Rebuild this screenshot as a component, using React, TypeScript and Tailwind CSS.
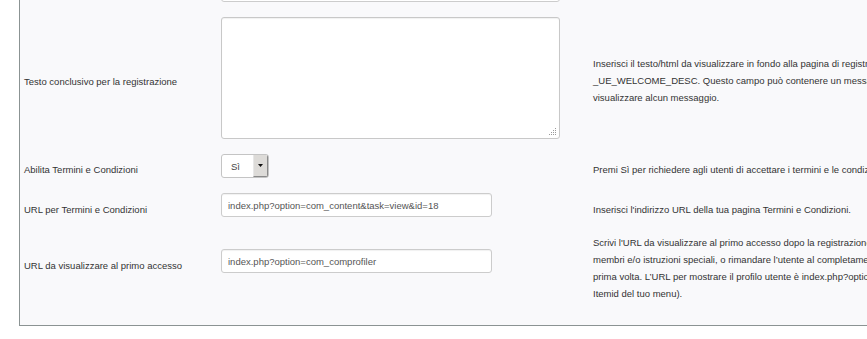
import React from 'react';

const font = { fontFamily: '"Liberation Sans", Arial, sans-serif' };

// Little dotted grip drawn in the textarea corner
const Grip = () => (
  <svg width="9" height="9" viewBox="0 0 9 9" className="absolute right-[2px] bottom-[2px]">
    {[
      [7, 1], [7, 3], [5, 3], [7, 5], [5, 5], [3, 5], [7, 7], [5, 7], [3, 7], [1, 7],
    ].map(([x, y], i) => (
      <rect key={i} x={x} y={y} width="1" height="1" fill="#9a9a9a" />
    ))}
  </svg>
);

const TextInput = ({ value, width }: { value: string; width: string }) => (
  <div
    className={`h-[24px] ${width} bg-white border border-[#cccccc] rounded-[3px] shadow-[inset_0_1px_1px_rgba(0,0,0,0.06)] flex items-center pl-[6px] text-[9.5px] text-[#555] whitespace-nowrap`}
  >
    {value}
  </div>
);

export default function App() {
  return (
    <div className="w-[867px] h-[339px] bg-white overflow-hidden pl-[19px] text-[#333] text-[9.5px] leading-[17px]" style={font}>
      <div className="w-[1000px] -mt-[28px] bg-[#f9f9fb] border-l border-b border-[#8b9393]">
        {/* row cut off at the top */}
        <div className="flex h-[30px] pt-[6px]">
          <div className="w-[201px] shrink-0" />
          <div className="w-[372px] shrink-0">
            <TextInput value="" width="w-[339px]" />
          </div>
        </div>

        {/* Testo conclusivo */}
        <div className="flex h-[137px]">
          <div className="w-[201px] shrink-0 pl-[4px] pt-[71px] whitespace-nowrap">Testo conclusivo per la registrazione</div>
          <div className="w-[372px] shrink-0 pt-[15px]">
            <div className="relative w-[339px] h-[122px] bg-white border border-[#c8c8c8] rounded-[3px] shadow-[inset_0_1px_1px_rgba(0,0,0,0.06)]">
              <Grip />
            </div>
          </div>
          <div className="flex-1 pt-[53px] whitespace-nowrap">
            Inserisci il testo/html da visualizzare in fondo alla pagina di registrazione. Puoi usare la stringa di lingua
            <br />
            _UE_WELCOME_DESC. Questo campo può contenere un messaggio personalizzato oppure puoi lasciarlo vuoto per non
            <br />
            visualizzare alcun messaggio.
          </div>
        </div>

        {/* Abilita Termini */}
        <div className="flex h-[39px]">
          <div className="w-[201px] shrink-0 pl-[4px] pt-[22px] whitespace-nowrap">Abilita Termini e Condizioni</div>
          <div className="w-[372px] shrink-0 pt-[15px]">
            <div className="w-[48px] h-[24px] flex bg-white border border-[#c4c4c4] rounded-[3px] overflow-hidden">
              <div className="flex-1 flex items-center pl-[9px] text-[#444]">Sì</div>
              <div className="w-[15px] h-full bg-[#dddbd8] border-l border-[#e8e8e8] border-r border-b border-r-[#8a8a8a] border-b-[#8a8a8a] flex items-center justify-center">
                <svg width="5" height="3" viewBox="0 0 5 3">
                  <path d="M0 0h5L2.5 3z" fill="#111" />
                </svg>
              </div>
            </div>
          </div>
          <div className="flex-1 pt-[22px] whitespace-nowrap">
            Premi Sì per richiedere agli utenti di accettare i termini e le condizioni durante la registrazione.
          </div>
        </div>

        {/* URL per Termini */}
        <div className="flex h-[38px]">
          <div className="w-[201px] shrink-0 pl-[4px] pt-[23px] whitespace-nowrap">URL per Termini e Condizioni</div>
          <div className="w-[372px] shrink-0 pt-[15px]">
            <TextInput value="index.php?option=com_content&task=view&id=18" width="w-[271px]" />
          </div>
          <div className="flex-1 pt-[23px] whitespace-nowrap">
            Inserisci l'indirizzo URL della tua pagina Termini e Condizioni.
          </div>
        </div>

        {/* URL primo accesso */}
        <div className="flex h-[109px]">
          <div className="w-[201px] shrink-0 pl-[4px] pt-[41px] whitespace-nowrap">URL da visualizzare al primo accesso</div>
          <div className="w-[372px] shrink-0 pt-[33px]">
            <TextInput value="index.php?option=com_comprofiler" width="w-[271px]" />
          </div>
          <div className="flex-1 pt-[18px] whitespace-nowrap">
            Scrivi l'URL da visualizzare al primo accesso dopo la registrazione. Puoi mostrare una pagina di benvenuto per i nuovi
            <br />
            membri e/o istruzioni speciali, o rimandare l’utente al completamento del suo profilo al primo accesso per la
            <br />
            prima volta. L’URL per mostrare il profilo utente è index.php?option=com_comprofiler (aggiungi &amp;Itemid= con l'
            <br />
            Itemid del tuo menu).
          </div>
        </div>
      </div>
    </div>
  );
}
